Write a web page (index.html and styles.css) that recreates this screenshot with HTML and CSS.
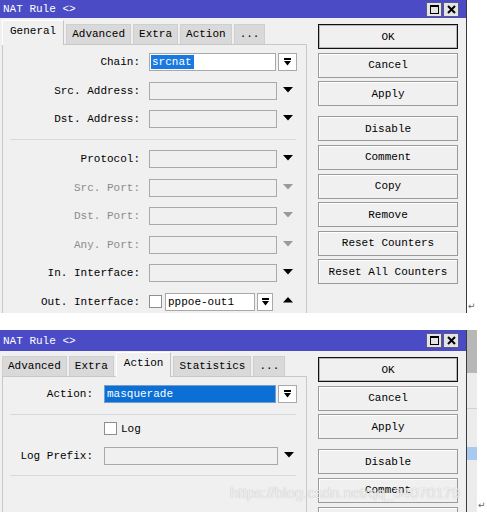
FILE: index.html
```html
<!DOCTYPE html>
<html lang="en">
<head>
    <meta charset="UTF-8">
    <meta name="viewport" content="width=device-width, initial-scale=1.0">
    <title>NAT Rule</title>
    <link rel="stylesheet" href="styles.css">
</head>
<body>
    <!-- first window: General tab -->
    <div class="shot shot-top">
        <div class="win">
            <div class="titlebar">
                <span class="title">NAT Rule &lt;&gt;</span>
                <span class="wctl">
                    <span class="wbtn"><svg width="13" height="13" viewBox="0 0 13 13"><rect x="2.5" y="2.5" width="8" height="8" fill="none" stroke="#000" stroke-width="1"/><rect x="2.5" y="2.5" width="8" height="1.5" fill="#000"/></svg></span>
                    <span class="wbtn"><svg width="13" height="13" viewBox="0 0 13 13"><path d="M3 3 L10 10 M10 3 L3 10" stroke="#000" stroke-width="2"/></svg></span>
                </span>
            </div>
            <div class="win-body">
                <div class="main">
                    <div class="tabs">
                        <span class="tab active">General</span>
                        <span class="tab">Advanced</span>
                        <span class="tab">Extra</span>
                        <span class="tab">Action</span>
                        <span class="tab">...</span>
                    </div>
                    <div class="panel">
                        <div class="row">
                            <span class="lbl">Chain:</span>
                            <span class="field white w-chain"><span class="hl">srcnat</span></span>
                            <span class="ddbtn"><svg width="7" height="8" viewBox="0 0 7 8"><rect x="0" y="0" width="7" height="2"/><polygon points="0,3 7,3 3.5,7.5"/></svg></span>
                        </div>
                        <div class="row">
                            <span class="lbl">Src. Address:</span>
                            <span class="field"></span>
                            <svg class="arrow" width="10" height="6" viewBox="0 0 10 6"><polygon points="0,0 10,0 5,5.5"/></svg>
                        </div>
                        <div class="row">
                            <span class="lbl">Dst. Address:</span>
                            <span class="field"></span>
                            <svg class="arrow" width="10" height="6" viewBox="0 0 10 6"><polygon points="0,0 10,0 5,5.5"/></svg>
                        </div>
                        <div class="sep"></div>
                        <div class="row">
                            <span class="lbl">Protocol:</span>
                            <span class="field"></span>
                            <svg class="arrow" width="10" height="6" viewBox="0 0 10 6"><polygon points="0,0 10,0 5,5.5"/></svg>
                        </div>
                        <div class="row dim">
                            <span class="lbl">Src. Port:</span>
                            <span class="field"></span>
                            <svg class="arrow" width="10" height="6" viewBox="0 0 10 6"><polygon points="0,0 10,0 5,5.5"/></svg>
                        </div>
                        <div class="row dim">
                            <span class="lbl">Dst. Port:</span>
                            <span class="field"></span>
                            <svg class="arrow" width="10" height="6" viewBox="0 0 10 6"><polygon points="0,0 10,0 5,5.5"/></svg>
                        </div>
                        <div class="row dim">
                            <span class="lbl">Any. Port:</span>
                            <span class="field"></span>
                            <svg class="arrow" width="10" height="6" viewBox="0 0 10 6"><polygon points="0,0 10,0 5,5.5"/></svg>
                        </div>
                        <div class="row">
                            <span class="lbl">In. Interface:</span>
                            <span class="field"></span>
                            <svg class="arrow" width="10" height="6" viewBox="0 0 10 6"><polygon points="0,0 10,0 5,5.5"/></svg>
                        </div>
                        <div class="row">
                            <span class="lbl">Out. Interface:</span>
                            <span class="check"></span>
                            <span class="field white w-iface">pppoe-out1</span>
                            <span class="ddbtn narrow"><svg width="7" height="8" viewBox="0 0 7 8"><rect x="0" y="0" width="7" height="2"/><polygon points="0,3 7,3 3.5,7.5"/></svg></span>
                            <svg class="arrow up" width="10" height="6" viewBox="0 0 10 6"><polygon points="0,5.5 10,5.5 5,0"/></svg>
                        </div>
                    </div>
                </div>
                <div class="side">
                    <button class="btn default">OK</button>
                    <button class="btn">Cancel</button>
                    <button class="btn spaced">Apply</button>
                    <button class="btn">Disable</button>
                    <button class="btn">Comment</button>
                    <button class="btn">Copy</button>
                    <button class="btn">Remove</button>
                    <button class="btn">Reset Counters</button>
                    <button class="btn">Reset All Counters</button>
                </div>
            </div>
        </div>
        <span class="pmark">&#8629;</span>
    </div>

    <!-- second window: Action tab -->
    <div class="shot shot-bottom">
        <div class="win">
            <div class="titlebar tall">
                <span class="title">NAT Rule &lt;&gt;</span>
                <span class="wctl">
                    <span class="wbtn"><svg width="13" height="13" viewBox="0 0 13 13"><rect x="2.5" y="2.5" width="8" height="8" fill="none" stroke="#000" stroke-width="1"/><rect x="2.5" y="2.5" width="8" height="1.5" fill="#000"/></svg></span>
                    <span class="wbtn"><svg width="13" height="13" viewBox="0 0 13 13"><path d="M3 3 L10 10 M10 3 L3 10" stroke="#000" stroke-width="2"/></svg></span>
                </span>
            </div>
            <div class="win-body">
                <div class="main">
                    <div class="tabs short">
                        <span class="tab">Advanced</span>
                        <span class="tab">Extra</span>
                        <span class="tab active">Action</span>
                        <span class="tab">Statistics</span>
                        <span class="tab">...</span>
                    </div>
                    <div class="panel panel-b">
                        <div class="row">
                            <span class="lbl">Action:</span>
                            <span class="field blue w-action">masquerade</span>
                            <span class="ddbtn"><svg width="7" height="8" viewBox="0 0 7 8"><rect x="0" y="0" width="7" height="2"/><polygon points="0,3 7,3 3.5,7.5"/></svg></span>
                        </div>
                        <div class="sep tight"></div>
                        <div class="row row-log">
                            <span class="lbl"></span>
                            <span class="check"></span>
                            <span class="check-text">Log</span>
                        </div>
                        <div class="row">
                            <span class="lbl">Log Prefix:</span>
                            <span class="field w-prefix"></span>
                            <svg class="arrow" width="10" height="6" viewBox="0 0 10 6"><polygon points="0,0 10,0 5,5.5"/></svg>
                        </div>
                        <div class="sep"></div>
                    </div>
                </div>
                <div class="side">
                    <button class="btn default">OK</button>
                    <button class="btn">Cancel</button>
                    <button class="btn spaced">Apply</button>
                    <button class="btn">Disable</button>
                    <button class="btn">Comment</button>
                    <button class="btn">Copy</button>
                </div>
            </div>
        </div>
        <div class="behind"></div>
        <span class="pmark">&#8629;</span>
    </div>

    <div class="watermark">https://blog.csdn.net/qq_34070179</div>
</body>
</html>
```

FILE: styles.css
```css
/* Reset */
* {
    margin: 0;
    padding: 0;
    box-sizing: border-box;
}

body {
    position: relative;
    width: 487px;
    height: 512px;
    overflow: hidden;
    font-family: 'Liberation Mono', 'DejaVu Sans Mono', monospace;
    font-size: 11px;
    color: #000;
    background: #ffffff;
}

.shot {
    display: flex;
    align-items: flex-end;
}

.shot-top {
    height: 313px;
    margin-bottom: 17px;
}

.shot-bottom {
    height: 182px;
}

/* Window frame */
.win {
    width: 467px;
    height: 100%;
    display: flex;
    flex-direction: column;
    background: #f0f0f0;
    border-right: 1px solid #3c3c3c;
    overflow: hidden;
}

.titlebar {
    flex-shrink: 0;
    height: 18px;
    display: flex;
    align-items: center;
    justify-content: space-between;
    padding-left: 3px;
    padding-right: 7px;
    background: #4b4bc6;
    color: #fff;
}

.titlebar.tall {
    height: 21px;
}

.wctl {
    display: flex;
    gap: 1px;
}

.wbtn {
    display: flex;
    width: 16px;
    height: 15px;
    align-items: center;
    justify-content: center;
    background: #e4e4e4;
    border: 1px solid #5a5a8a;
}

.win-body {
    flex: 1;
    min-height: 0;
    display: flex;
    padding-left: 2px;
}

.main {
    width: 305px;
    display: flex;
    flex-direction: column;
}

/* Tabs */
.tabs {
    flex-shrink: 0;
    height: 24px;
    margin-top: 2px;
    display: flex;
    align-items: flex-end;
}

.tabs.short {
    height: 23px;
}

.tab {
    height: 20px;
    line-height: 18px;
    padding: 0 5px;
    margin-right: 2px;
    background: #d9d9d9;
    border: 1px solid #cfcfcf;
    border-bottom: none;
}

.tab.active {
    position: relative;
    z-index: 1;
    height: 25px;
    line-height: 20px;
    padding: 0 7px;
    margin-bottom: -1px;
    background: #f0f0f0;
    border-color: #c4c4c4;
    border-top-color: #fff;
    border-left-color: #fff;
}

.panel {
    flex: 1;
    min-height: 0;
    padding-top: 8px;
    border: 1px solid #c8c8c8;
    border-bottom: none;
}

/* Rows */
.row {
    flex-shrink: 0;
    height: 18px;
    margin-bottom: 10.6px;
    display: flex;
    align-items: center;
}

.lbl {
    width: 137px;
    margin-right: 9px;
    text-align: right;
    white-space: nowrap;
}

.panel-b .lbl {
    width: 90px;
    margin-right: 11px;
}

.row.dim {
    color: #8c8c8c;
}

.field {
    width: 128px;
    height: 18px;
    line-height: 16px;
    padding-left: 2px;
    background: #f0f0f0;
    border: 1px solid #a9a9a9;
    white-space: nowrap;
    overflow: hidden;
}

.field.white {
    background: #fff;
}

.field.blue {
    background: #0b6fd6;
    color: #fff;
    border-color: #7a9cc8;
}

.w-chain {
    width: 127px;
    padding-left: 1px;
}

.w-iface {
    width: 90px;
}

.w-action {
    width: 172px;
}

.w-prefix {
    width: 174px;
}

.hl {
    display: inline-block;
    padding: 0 2px 0 1px;
    line-height: 14px;
    background: #1979e0;
    color: #fff;
}

.ddbtn {
    width: 19px;
    height: 18px;
    margin-left: 2px;
    display: flex;
    align-items: center;
    justify-content: center;
    background: #fff;
    border: 1px solid #a9a9a9;
}

.ddbtn.narrow {
    width: 16px;
}

.arrow {
    margin-left: 6px;
    margin-top: -2px;
    fill: #000;
}

.row.dim .arrow {
    fill: #9a9a9a;
}

.arrow.up {
    margin-left: 10px;
    margin-top: -4px;
}

.check {
    width: 13px;
    height: 13px;
    margin-right: 3px;
    background: #fff;
    border: 1px solid #8e8e8e;
}

.check-text {
    margin-left: 1px;
}

.row-log {
    margin-bottom: 9px;
}

.sep {
    flex-shrink: 0;
    height: 1px;
    margin: 0 10px 10.2px 7px;
    background: #d8d8d8;
}

.sep.tight {
    margin-bottom: 5px;
}

/* Command buttons */
.side {
    width: 140px;
    margin-left: 11px;
    padding-top: 6px;
    display: flex;
    flex-direction: column;
    gap: 3.6px;
}

.btn {
    flex-shrink: 0;
    height: 25px;
    font-family: inherit;
    font-size: 11px;
    color: #000;
    background: #f0f0f0;
    border: 1px solid #9a9a9a;
    box-shadow: inset 1px 1px 0 #fff;
}

.btn.default {
    border-color: #111;
    box-shadow: inset 0 0 0 1px #b8b8b8;
}

.btn.spaced {
    margin-bottom: 6.6px;
}

/* Bits outside the windows */
.behind {
    width: 10px;
    height: 100%;
    background: linear-gradient(to bottom,
        #b7b7b7 0, #b7b7b7 43px,
        #ececec 43px, #ececec 78px,
        #d0d0d0 78px, #d0d0d0 79px,
        #ececec 79px, #ececec 117px,
        #a9c9ef 117px, #a9c9ef 130px,
        #ececec 130px);
}

.pmark {
    margin-left: 1px;
    margin-bottom: 2px;
    font-family: 'DejaVu Sans', sans-serif;
    font-size: 9px;
    line-height: 10px;
    color: #666;
}

.watermark {
    position: absolute;
    left: 230px;
    top: 484px;
    font-family: 'Liberation Sans', Arial, sans-serif;
    font-size: 15px;
    color: rgba(255, 255, 255, 0.8);
    text-shadow: 0 0 1px rgba(0, 0, 0, 0.3);
    white-space: nowrap;
}
```
